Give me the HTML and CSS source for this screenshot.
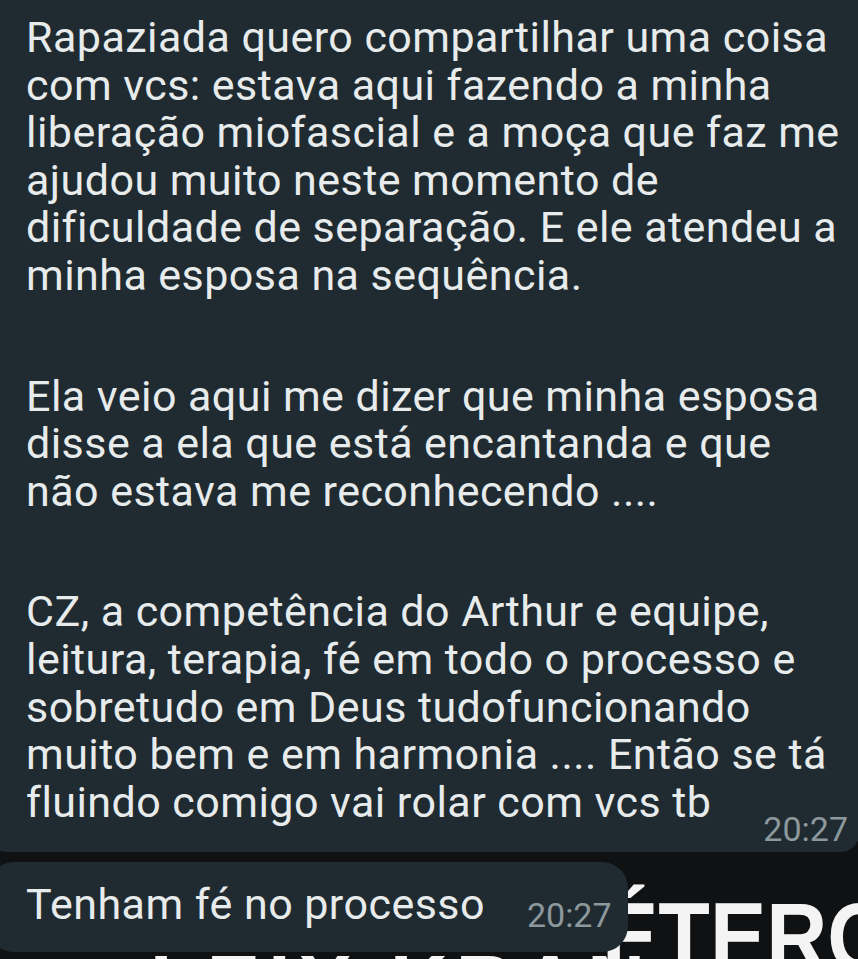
FILE: index.html
```html
<!DOCTYPE html>
<html lang="pt">
<head>
<meta charset="utf-8">
<link rel="stylesheet" href="styles.css">
</head>
<body>
<div class="screen">
  <div class="backdrop">
    <span class="big-word">ÉTERO</span>
    <span class="big-lower">LEIX KRAN</span>
  </div>
  <div class="chat">
    <div class="bubble bubble-main">
      <p class="msg">Rapaziada quero compartilhar uma coisa<br>com vcs: estava aqui fazendo a minha<br>liberação miofascial e a moça que faz me<br>ajudou muito neste momento de<br>dificuldade de separação. E ele atendeu a<br>minha esposa na sequência.</p>
      <p class="msg">Ela veio aqui me dizer que minha esposa<br>disse a ela que está encantanda e que<br>não estava me reconhecendo ....</p>
      <p class="msg msg-last">CZ, a competência do Arthur e equipe,<br>leitura, terapia, fé em todo o processo e<br>sobretudo em Deus tudofuncionando<br>muito bem e em harmonia .... Então se tá</p>
      <div class="last-row">
        <span class="msg-line">fluindo comigo vai rolar com vcs tb</span>
        <span class="time">20:27</span>
      </div>
    </div>
    <div class="bubble bubble-small">
      <span class="msg-line">Tenham fé no processo</span>
      <span class="time time-small">20:27</span>
    </div>
  </div>
</div>
</body>
</html>
```
FILE: styles.css
```css
html, body {
  margin: 0;
  padding: 0;
}
body {
  background: #101112;
  font-family: Roboto, "Noto Sans", sans-serif;
  color: #e8ebec;
}
.screen {
  position: relative;
  width: 858px;
  height: 959px;
  overflow: hidden;
  background: #101112;
}
.backdrop {
  position: absolute;
  left: 0;
  top: 0;
  width: 858px;
  height: 959px;
}
.big-word {
  position: absolute;
  left: 602px;
  top: 889px;
  font-family: "Liberation Sans", Arial, sans-serif;
  font-weight: 700;
  font-size: 96px;
  line-height: 1;
  color: #f4f4f4;
  transform: scaleX(0.88);
  transform-origin: left top;
  white-space: nowrap;
}
.big-lower {
  position: absolute;
  left: 150px;
  top: 944px;
  font-family: "Liberation Sans", Arial, sans-serif;
  font-weight: 700;
  font-size: 80px;
  line-height: 1;
  color: #f4f4f4;
  letter-spacing: 8px;
  white-space: nowrap;
}
.chat {
  position: relative;
  display: flex;
  flex-direction: column;
  gap: 10px;
}
.bubble {
  background: #1f2b31;
  margin-left: -12px;
  padding-left: 38px;
}
.bubble-main {
  width: 872px;
  box-sizing: border-box;
  border-radius: 20px;
  margin-top: -20px;
  padding-top: 34px;
  padding-bottom: 6px;
  padding-right: 12px;
}
.msg {
  margin: 0 0 73px 0;
  font-size: 43px;
  line-height: 47.6px;
  letter-spacing: 0.45px;
  white-space: nowrap;
}
.msg-last {
  margin-bottom: 0;
}
.last-row {
  display: flex;
  align-items: flex-start;
  justify-content: space-between;
}
.msg-line {
  font-size: 43px;
  line-height: 47.6px;
  letter-spacing: 0.45px;
  white-space: nowrap;
}
.time {
  font-size: 34px;
  line-height: 34px;
  letter-spacing: 0;
  color: #8d989d;
  margin-top: 33px;
}
.bubble-small {
  align-self: flex-start;
  width: 640px;
  box-sizing: border-box;
  height: 90px;
  border-radius: 26px;
  display: flex;
  align-items: flex-start;
  padding-top: 19px;
}
.time-small {
  margin-left: 42px;
  margin-top: 17px;
}
```
